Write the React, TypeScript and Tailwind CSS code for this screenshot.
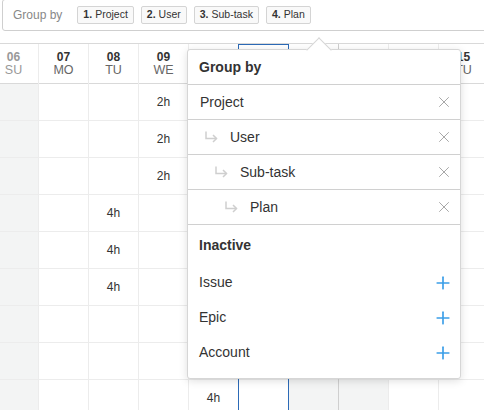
import React from 'react';
import { X, Plus } from 'lucide-react';

type Day = { num: string; name: string; weekend?: boolean; today?: boolean; muted?: boolean };

const days: Day[] = [
  { num: '06', name: 'SU', weekend: true, muted: true },
  { num: '07', name: 'MO' },
  { num: '08', name: 'TU' },
  { num: '09', name: 'WE' },
  { num: '10', name: 'TH' },
  { num: '11', name: 'FR', today: true },
  { num: '12', name: 'SA', weekend: true },
  { num: '13', name: 'SU', weekend: true },
  { num: '14', name: 'MO' },
  { num: '15', name: 'TU' },
];

// hours by column index -> row index
const hours: Record<number, Record<number, string>> = {
  2: { 3: '4h', 4: '4h', 5: '4h' },
  3: { 0: '2h', 1: '2h', 2: '2h' },
  4: { 8: '4h' },
};

const ROWS = 9;

const active = [
  { label: 'Project', depth: 0 },
  { label: 'User', depth: 1 },
  { label: 'Sub-task', depth: 2 },
  { label: 'Plan', depth: 3 },
];

const inactive = ['Issue', 'Epic', 'Account'];

const chips = [
  { n: '1.', label: 'Project' },
  { n: '2.', label: 'User' },
  { n: '3.', label: 'Sub-task' },
  { n: '4.', label: 'Plan' },
];

const SubArrow = () => (
  <svg width="14" height="12" viewBox="0 0 14 12" fill="none" stroke="#cfcfcf" strokeWidth="1.5">
    <path d="M2 0.5 V7.5 H12.5" />
    <path d="M9 4 L12.5 7.5 L9 11" />
  </svg>
);

export default function App() {
  return (
    <div
      className="relative w-[484px] h-[410px] overflow-hidden bg-white text-[#333]"
      style={{ fontFamily: '"Liberation Sans", Arial, sans-serif' }}
    >
      {/* Toolbar */}
      <div className="ml-[2px] mt-[-1px] w-[520px] h-[32px] border border-[#cfcfcf] rounded-[3px] flex items-center pl-[10px] gap-[7px]">
        <span className="text-[12px] text-[#888] mr-[8px]">Group by</span>
        {chips.map((c) => (
          <span
            key={c.n}
            className="h-[18px] px-[5px] flex items-center border border-[#d4d4d4] bg-[#f9f9f9] rounded-[2px] text-[10.5px] text-[#333]"
          >
            <b className="font-bold mr-[3px]">{c.n}</b>
            {c.label}
          </span>
        ))}
      </div>

      {/* Calendar grid */}
      <div className="mt-[12px] ml-[-11px] flex border-t border-[#d9d9d9]">
        {days.map((d, ci) => {
          const next = days[ci + 1];
          const rightBorder = d.today || next?.today ? 'border-[#2c6ab7]' : ci === 6 ? 'border-[#cfcfcf]' : 'border-[#ececec]';
          return (
            <div key={d.num} className={`w-[50px] shrink-0 flex flex-col border-r ${rightBorder} ${d.weekend ? 'bg-[#f3f4f4]' : ''}`}>
              <div
                className={`h-[40px] flex flex-col items-center justify-center bg-white border-b border-[#d9d9d9] leading-[13px] ${
                  d.today ? 'shadow-[inset_0_1px_0_#2c6ab7]' : ''
                }`}
              >
                <span className={`text-[12px] font-bold ${d.muted ? 'text-[#999]' : 'text-[#333]'}`}>{d.num}</span>
                <span className={`text-[12.5px] ${d.muted ? 'text-[#999]' : 'text-[#666]'}`}>{d.name}</span>
              </div>
              {Array.from({ length: ROWS }).map((_, ri) => (
                <div key={ri} className="h-[37px] border-b border-[#ececec] flex items-center justify-center text-[12px] text-[#333]">
                  {hours[ci]?.[ri] ?? ''}
                </div>
              ))}
            </div>
          );
        })}
      </div>

      {/* Group by popover */}
      <div className="absolute left-[187px] top-[49px] w-[274px] h-[330px] bg-white border border-[#d6d6d6] rounded-[3px] shadow-[0_2px_8px_rgba(0,0,0,0.13)]">
        <div className="absolute left-[122px] top-[-9px] w-[18px] h-[18px] rotate-45 bg-white border-l border-t border-[#d6d6d6]" />
        <div className="relative h-[35px] flex items-center pl-[11px] border-b border-[#d0d0d0] text-[14px] font-bold text-[#333]">
          Group by
        </div>
        {active.map((a) => (
          <div key={a.label} className="h-[35px] flex items-center border-b border-[#d0d0d0] pr-[7px]">
            <div className="flex items-center" style={{ paddingLeft: a.depth === 0 ? 12 : 6 + a.depth * 10 }}>
              {a.depth > 0 && (
                <span className="mr-[12px] flex items-center">
                  <SubArrow />
                </span>
              )}
              <span className="text-[14px] text-[#333]">{a.label}</span>
            </div>
            <X size={18} strokeWidth={1.3} className="ml-auto text-[#a6a6a6]" />
          </div>
        ))}
        <div className="h-[40px] flex items-center pl-[11px] text-[14px] font-bold text-[#333]">Inactive</div>
        {inactive.map((label) => (
          <div key={label} className="h-[35px] flex items-center pl-[11px] pr-[7px]">
            <span className="text-[14px] text-[#333]">{label}</span>
            <Plus size={20} strokeWidth={2} className="ml-auto text-[#3b9ee8]" />
          </div>
        ))}
      </div>
    </div>
  );
}
